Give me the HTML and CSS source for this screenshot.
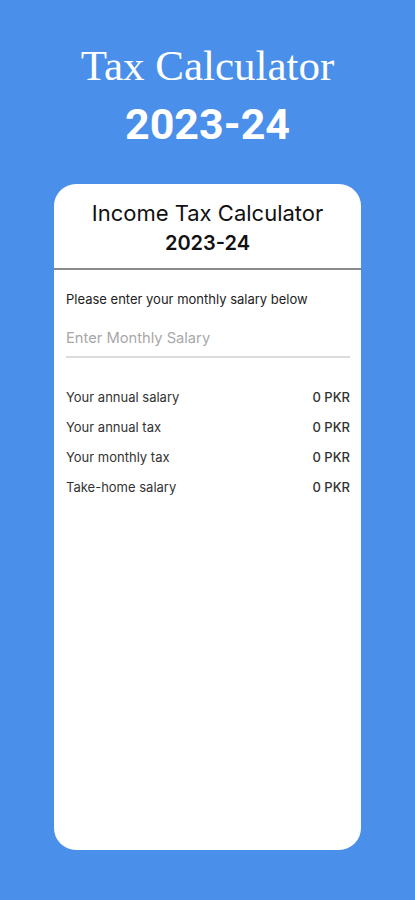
FILE: index.html
```html
<!DOCTYPE html>
<html lang="en">
<head>
  <meta charset="UTF-8">
  <meta name="viewport" content="width=device-width, initial-scale=1.0">
  <title>Tax Calculator 2023-24</title>
  <link rel="stylesheet" href="styles.css">
</head>
<body>
  <!-- Header -->
  <header class="hero">
    <h1 class="hero-title">Tax Calculator</h1>
    <p class="hero-year">2023-24</p>
  </header>

  <!-- Card -->
  <main class="card">
    <div class="card-head">
      <h2>Income Tax Calculator</h2>
      <p class="card-year">2023-24</p>
    </div>

    <div class="card-body">
      <p class="hint">Please enter your monthly salary below</p>
      <input type="text" class="salary-input" placeholder="Enter Monthly Salary">

      <ul class="results">
        <li><span>Your annual salary</span><span class="value">0 PKR</span></li>
        <li><span>Your annual tax</span><span class="value">0 PKR</span></li>
        <li><span>Your monthly tax</span><span class="value">0 PKR</span></li>
        <li><span>Take-home salary</span><span class="value">0 PKR</span></li>
      </ul>
    </div>
  </main>
</body>
</html>
```

FILE: styles.css
```css
* {
  box-sizing: border-box;
}

html, body {
  margin: 0;
}

body {
  font-family: Inter, Roboto, "Liberation Sans", sans-serif;
  background: #4a8fea;
  min-height: 900px;
  padding: 0 54px 49px 54px;
}

/* Header */
.hero {
  text-align: center;
  color: #fff;
  padding-top: 39px;
}

.hero-title {
  font-family: "Liberation Serif", serif;
  font-weight: normal;
  font-size: 43px;
  line-height: 54px;
  margin: 0;
}

.hero-year {
  font-family: Roboto, sans-serif;
  font-weight: bold;
  font-size: 43px;
  line-height: 50px;
  margin: 6px 0 0 0;
}

/* Card */
.card {
  margin-top: 35px;
  background: #fff;
  border-radius: 22px;
  height: 666px;
  overflow: hidden;
}

.card-head {
  text-align: center;
  padding-top: 14px;
  padding-bottom: 12px;
  border-bottom: 2px solid #8a8a8a;
}

.card-head h2 {
  font-weight: normal;
  font-size: 22px;
  line-height: 30px;
  margin: 0;
  color: #111;
}

.card-year {
  font-weight: 600;
  font-size: 20px;
  line-height: 26px;
  margin: 2px 0 0 0;
  color: #111;
}

.card-body {
  padding: 20px 11px 0 12px;
}

.hint {
  font-size: 13px;
  color: #222;
  margin: 0;
  line-height: 18px;
}

.salary-input {
  display: block;
  width: 100%;
  border: none;
  border-bottom: 2px solid #dcdcdc;
  font-family: inherit;
  font-size: 14.7px;
  padding: 11px 0 9px 0;
  margin-top: 10px;
  outline: none;
}

.salary-input::placeholder {
  color: #a8a8a8;
}

.results {
  list-style: none;
  margin: 24px 0 0 0;
  padding: 0;
}

.results li {
  display: flex;
  justify-content: space-between;
  font-size: 13px;
  line-height: 30px;
  color: #333;
}

.results .value {
  font-weight: 500;
  color: #333;
}
```
